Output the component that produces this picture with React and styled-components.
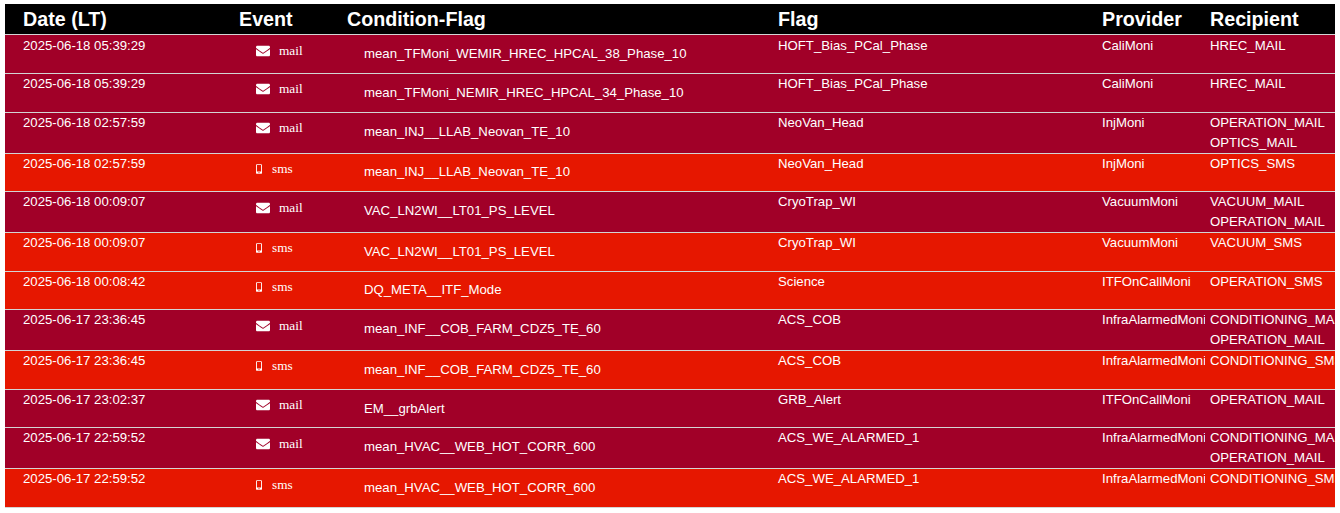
import React from 'react';
import styled, { createGlobalStyle } from 'styled-components';
import { FaEnvelope, FaMobileAlt } from 'react-icons/fa';

const Global = createGlobalStyle`
  html, body { margin: 0; padding: 0; background: #fff; overflow: hidden; }
  body { font-family: "Liberation Sans", Arial, sans-serif; }
`;

const columns = '229px 108px 431px 324px 108px 130px';

const Table = styled.div`
  width: 1330px;
  margin: 4px 0 0 5px;
  overflow: hidden;
  border-bottom: 1px solid #d4d4d4;
`;

const Head = styled.div`
  display: grid;
  grid-template-columns: ${columns};
  height: 30.45px;
  background: #000;
  color: #fff;
  font-size: 19.7px;
  font-weight: 700;
  line-height: 30px;
`;

const HeadCell = styled.div`
  padding-left: ${(p) => (p.$first ? 18 : 5)}px;
  white-space: nowrap;
`;

const Row = styled.div`
  display: grid;
  grid-template-columns: ${columns};
  box-sizing: border-box;
  height: ${(p) => (p.$double ? 41 : 38.57)}px;
  border-top: 1px solid #d4d4d4;
  background: ${(p) => (p.$kind === 'sms' ? '#e61700' : '#a10028')};
  color: #fff;
  font-size: 13.2px;
  line-height: 20px;
`;

const Cell = styled.div`
  padding: 0.09px 0 0 ${(p) => (p.$first ? 18 : 5)}px;
  white-space: nowrap;
  overflow: hidden;
`;

const EventCell = styled.div`
  display: flex;
  align-items: center;
  height: ${(p) => (p.$double ? 31 : 30.4)}px;
  padding-left: 22px;
  font-family: "Liberation Serif", "Times New Roman", serif;
  font-size: 13.3px;
`;

const MailIcon = styled(FaEnvelope)`
  width: 14px;
  height: 14px;
  margin-right: 9px;
`;

const SmsIcon = styled(FaMobileAlt)`
  width: 6px;
  height: 10px;
  margin-right: 10px;
`;

const ConditionCell = styled.div`
  padding: ${(p) => (p.$double ? 9 : 8.8)}px 0 0 22px;
  white-space: nowrap;
`;

const rows = [
  ['2025-06-18 05:39:29', 'mail', 'mean_TFMoni_WEMIR_HREC_HPCAL_38_Phase_10', 'HOFT_Bias_PCal_Phase', 'CaliMoni', ['HREC_MAIL']],
  ['2025-06-18 05:39:29', 'mail', 'mean_TFMoni_NEMIR_HREC_HPCAL_34_Phase_10', 'HOFT_Bias_PCal_Phase', 'CaliMoni', ['HREC_MAIL']],
  ['2025-06-18 02:57:59', 'mail', 'mean_INJ__LLAB_Neovan_TE_10', 'NeoVan_Head', 'InjMoni', ['OPERATION_MAIL', 'OPTICS_MAIL']],
  ['2025-06-18 02:57:59', 'sms', 'mean_INJ__LLAB_Neovan_TE_10', 'NeoVan_Head', 'InjMoni', ['OPTICS_SMS']],
  ['2025-06-18 00:09:07', 'mail', 'VAC_LN2WI__LT01_PS_LEVEL', 'CryoTrap_WI', 'VacuumMoni', ['VACUUM_MAIL', 'OPERATION_MAIL']],
  ['2025-06-18 00:09:07', 'sms', 'VAC_LN2WI__LT01_PS_LEVEL', 'CryoTrap_WI', 'VacuumMoni', ['VACUUM_SMS']],
  ['2025-06-18 00:08:42', 'sms', 'DQ_META__ITF_Mode', 'Science', 'ITFOnCallMoni', ['OPERATION_SMS']],
  ['2025-06-17 23:36:45', 'mail', 'mean_INF__COB_FARM_CDZ5_TE_60', 'ACS_COB', 'InfraAlarmedMoni', ['CONDITIONING_MAIL', 'OPERATION_MAIL']],
  ['2025-06-17 23:36:45', 'sms', 'mean_INF__COB_FARM_CDZ5_TE_60', 'ACS_COB', 'InfraAlarmedMoni', ['CONDITIONING_SMS']],
  ['2025-06-17 23:02:37', 'mail', 'EM__grbAlert', 'GRB_Alert', 'ITFOnCallMoni', ['OPERATION_MAIL']],
  ['2025-06-17 22:59:52', 'mail', 'mean_HVAC__WEB_HOT_CORR_600', 'ACS_WE_ALARMED_1', 'InfraAlarmedMoni', ['CONDITIONING_MAIL', 'OPERATION_MAIL']],
  ['2025-06-17 22:59:52', 'sms', 'mean_HVAC__WEB_HOT_CORR_600', 'ACS_WE_ALARMED_1', 'InfraAlarmedMoni', ['CONDITIONING_SMS']],
];

export default function App() {
  return (
    <>
      <Global />
      <Table>
        <Head>
          <HeadCell $first>Date (LT)</HeadCell>
          <HeadCell>Event</HeadCell>
          <HeadCell>Condition-Flag</HeadCell>
          <HeadCell>Flag</HeadCell>
          <HeadCell>Provider</HeadCell>
          <HeadCell>Recipient</HeadCell>
        </Head>
        {rows.map(([date, kind, condition, flag, provider, recipients], i) => {
          const double = recipients.length > 1;
          return (
            <Row key={i} $kind={kind} $double={double}>
              <Cell $first>{date}</Cell>
              <EventCell $double={double}>
                {kind === 'mail' ? <MailIcon /> : <SmsIcon />}
                {kind}
              </EventCell>
              <ConditionCell $double={double}>{condition}</ConditionCell>
              <Cell>{flag}</Cell>
              <Cell>{provider}</Cell>
              <Cell>
                {recipients.map((r) => (
                  <div key={r}>{r}</div>
                ))}
              </Cell>
            </Row>
          );
        })}
      </Table>
    </>
  );
}
